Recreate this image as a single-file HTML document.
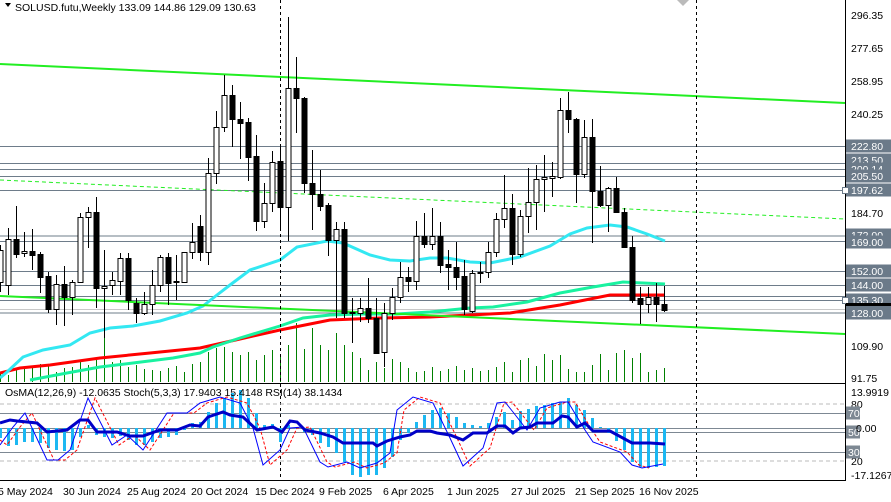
<!DOCTYPE html>
<html><head><meta charset="utf-8"><style>
html,body{margin:0;padding:0;background:#fff;width:891px;height:502px;overflow:hidden}
svg{display:block;font-family:"Liberation Sans",sans-serif}
.ax{font-size:10.5px;fill:#000}
.bx{font-size:10.5px;fill:#fff}
</style></head><body>
<svg id="s" width="891" height="502" viewBox="0 0 891 502" xmlns="http://www.w3.org/2000/svg">
<rect width="891" height="502" fill="#fff"/>
<g id="hl" stroke="#6e7c8a" stroke-width="1"></g>
<g id="vol" stroke="#008000" stroke-width="1"></g>
<polyline fill="none" stroke="#ff0000" stroke-width="3" points="0,373 20,368 50,365 100,358 150,353 200,348 240,339 280,330 330,320 380,318 430,317 470,315 510,313 560,305 610,295 665,295"/>
<polyline fill="none" stroke="#19f2a0" stroke-width="3" points="30,380 67,373 100,367 133,363 173,358 200,353 213,347 240,338 280,326 303,318 330,315 363,314 397,314 430,312 470,308 493,307 527,302 560,293 593,287 623,282 665,284"/>
<polyline fill="none" stroke="#33e8f2" stroke-width="3" points="0,378 7,372 23,357 43,350 70,345 90,333 110,328 133,326 160,321 187,313 203,306 217,295 230,285 250,270 280,260 297,247 327,241 343,243 370,255 390,260 410,261 430,258 447,258 470,262 490,263 520,257 550,246 560,240 570,234 587,228 610,225 627,227 647,234 665,241"/>
<line x1="0" y1="64" x2="845" y2="103" stroke="#22ee22" stroke-width="2"/>
<line x1="0" y1="296" x2="845" y2="334" stroke="#22ee22" stroke-width="2"/>
<line x1="0" y1="180" x2="845" y2="219" stroke="#22ee22" stroke-width="1" stroke-dasharray="4,3"/>
<g id="cd"></g>
<line x1="280.5" y1="0" x2="280.5" y2="480" stroke="#000" stroke-dasharray="3,3"/>
<line x1="696.5" y1="0" x2="696.5" y2="480" stroke="#000" stroke-dasharray="3,3"/>
<polygon points="677,0 689,0 683,6" fill="#bbb"/>
<polygon points="5,3 11,3 8,7" fill="#000"/>
<text x="15" y="11" class="ax">SOLUSD.futu,Weekly  133.09 144.86 129.09 130.63</text>
<line x1="0" y1="383.5" x2="845" y2="383.5" stroke="#000"/>
<line x1="0" y1="480.5" x2="845" y2="480.5" stroke="#000"/>
<line x1="0" y1="404" x2="845" y2="404" stroke="#bbb" stroke-dasharray="4,3"/>
<line x1="0" y1="461" x2="845" y2="461" stroke="#bbb" stroke-dasharray="4,3"/>
<line x1="0" y1="413.5" x2="845" y2="413.5" stroke="#7d8893"/>
<line x1="0" y1="428.5" x2="845" y2="428.5" stroke="#7d8893"/>
<line x1="0" y1="432.5" x2="845" y2="432.5" stroke="#7d8893"/>
<line x1="0" y1="452.5" x2="845" y2="452.5" stroke="#7d8893"/>
<g id="hist" fill="#1cb8f2"></g>
<polyline id="sig" fill="none" stroke="#ff0000" stroke-width="1" stroke-dasharray="3,2"/>
<polyline id="stm" fill="none" stroke="#0000ff" stroke-width="1" points="0,445 13,427 25,413 47,460 58,460 70,450 88,398 112,445 127,435 143,450 167,413 187,413 200,403 220,397 240,403 253,428 263,465 280,450 290,428 303,427 320,462 328,467 347,462 360,468 377,463 390,453 397,410 413,397 433,403 450,438 463,466 483,448 497,403 505,402 513,412 527,430 540,408 560,402 568,402 585,430 593,442 620,452 632,465 642,468 663,464"/>
<polyline fill="none" stroke="#0000c8" stroke-width="3" points="0,423 10,420 17,421 37,423 47,432 67,430 80,420 88,420 97,432 117,432 130,436 143,436 160,430 177,430 190,425 200,426 208,417 223,412 230,415 243,417 257,430 273,427 282,432 290,421 297,422 305,430 320,433 333,437 343,443 373,443 377,446 387,441 400,437 410,435 417,431 430,431 437,433 450,435 463,440 473,433 487,433 497,426 505,426 513,433 520,428 530,427 537,423 553,423 562,416 568,417 577,427 585,423 593,431 610,431 632,443 650,443 665,444"/>
<text x="5" y="396" class="ax">OsMA(12,26,9) -12.0635  Stoch(5,3,3) 17.9403 15.4148  RSI(14) 38.1434</text>
<line x1="845.5" y1="0" x2="845.5" y2="481" stroke="#000"/>
<g class="ax">
<text x="851" y="19">296.35</text>
<text x="851" y="52">277.65</text>
<text x="851" y="85">258.95</text>
<text x="851" y="118">240.25</text>
<text x="851" y="217">184.70</text>
<text x="851" y="350">109.90</text>
<text x="851" y="382">91.75</text>
<text x="851" y="396">13.9919</text>
<text x="851" y="408">80</text>
<text x="851" y="465">20</text>
<text x="851" y="479">-17.1267</text>
</g>
<g id="bxs"></g>
<rect x="846" y="303" width="45" height="3" fill="#000"/>
<g class="ax">
<text x="-2" y="495">5 May 2024</text>
<text x="63" y="495">30 Jun 2024</text>
<text x="127" y="495">25 Aug 2024</text>
<text x="191" y="495">20 Oct 2024</text>
<text x="255" y="495">15 Dec 2024</text>
<text x="319" y="495">9 Feb 2025</text>
<text x="383" y="495">6 Apr 2025</text>
<text x="447" y="495">1 Jun 2025</text>
<text x="511" y="495">27 Jul 2025</text>
<text x="575" y="495">21 Sep 2025</text>
<text x="639" y="495">16 Nov 2025</text>
</g>
</svg>
<script>
var NS="http://www.w3.org/2000/svg";
function el(p,t,a,txt){var e=document.createElementNS(NS,t);for(var k in a)e.setAttribute(k,a[k]);if(txt)e.textContent=txt;document.getElementById(p).appendChild(e);return e;}
[146,163,169,176,190,235.5,241,271,285,296,300,312.5].forEach(function(y){el("hl","line",{x1:0,y1:y+.5,x2:845,y2:y+.5});});
el("hl","line",{x1:0,y1:309.5,x2:845,y2:309.5,stroke:"#c8c8c8"});
[[222.80,146],[213.50,160],[209.14,169],[205.50,176],[197.62,190],[172.00,235],[169.00,242],[152.00,271],[144.00,285],[135.30,300],[128.00,313]].forEach(function(b){
 el("bxs","rect",{x:846,y:b[1]-6.5,width:45,height:13,fill:"#6b7a89"});
 el("bxs","text",{x:851,y:b[1]+4,"class":"bx"},b[0].toFixed(2));
});
el("bxs","rect",{x:842.5,y:187.5,width:6,height:6,fill:"#fff",stroke:"#6b7a89"});
el("bxs","rect",{x:842.5,y:297.5,width:6,height:6,fill:"#fff",stroke:"#6b7a89"});
[[70,413],[50,432],[30,452]].forEach(function(b){
 el("bxs","rect",{x:846,y:b[1]-6.5,width:14,height:13,fill:"#7d8893"});
 el("bxs","text",{x:848,y:b[1]+4,"class":"bx"},b[0]);
});
el("bxs","text",{x:856,y:432,"class":"ax"},"0.00");
var C=[[250,282,245,292,1],[239,285,228,295,1],[239,254,206,258,0],[251,253,232,257,1],[251,255,229,270,0],[254,277,252,293,0],[276,309,272,313,0],[284,309,275,325,1],[284,297,266,326,0],[282,297,280,315,1],
[217,282,213,283,1],[212,217,207,248,1],[212,288,197,308,0],[286,288,250,338,1],[280,285,272,295,1],[258,281,253,295,1],[258,300,253,310,0],[303,313,298,323,0],[304,313,292,315,1],[285,304,270,315,1],
[257,285,255,292,1],[257,283,253,305,0],[281,282,255,300,0],[252,282,252,283,1],[242,252,223,259,1],[226,252,215,261,0],[173,252,158,265,1],[127,173,111,184,1],[95,127,75,132,1],[95,119,85,147,0],
[119,123,102,159,0],[122,157,118,181,0],[156,221,135,231,0],[203,221,183,228,1],[162,203,151,212,1],[161,207,146,230,0],[88,207,17,241,1],[88,98,57,133,0],[98,183,97,193,0],[183,194,150,230,0],
[194,206,170,211,0],[205,240,203,256,0],[229,240,222,318,1],[229,313,222,318,0],[312,313,298,343,1],[308,313,298,322,1],[308,318,278,323,0],[318,353,298,353,0],[313,352,303,367,1],[297,313,288,320,1],
[277,297,262,303,1],[277,281,267,292,0],[236,281,221,290,1],[236,244,213,248,0],[236,244,208,250,1],[236,265,222,273,0],[264,267,250,290,0],[267,277,242,290,0],[276,309,260,315,0],[273,311,270,313,1],
[272,273,262,283,1],[252,272,242,278,1],[219,252,213,257,1],[208,219,175,228,1],[208,254,194,265,0],[216,254,210,257,1],[202,216,168,233,1],[179,202,165,230,1],[177,179,155,212,1],[176,178,162,197,1],
[110,177,98,179,1],[110,119,92,133,0],[119,174,118,203,0],[137,174,120,178,1],[137,191,119,243,0],[191,205,166,207,0],[188,205,187,232,1],[188,212,177,213,0],[212,247,208,248,0],[247,300,236,303,0],
[298,304,287,324,0],[297,304,287,313,1],[297,304,283,322,0],[304,310,286,312,0]];
var V=[372,375,370,368,366,364,365,372,368,367,362,365,360,338,362,360,367,365,369,370,371,368,366,372,364,362,352,348,347,352,355,352,360,355,350,354,345,323,349,328,345,350,333,345,352,358,370,362,368,359,362,368,372,371,367,371,369,366,370,368,371,370,367,362,372,360,358,366,354,360,355,369,372,372,365,354,370,353,350,358,353,372,370,368];
for(var k=0;k<C.length;k++){
 var x=8*k+0.5,c=C[k];
 el("vol","line",{x1:x,y1:V[k],x2:x,y2:382});
 el("cd","line",{x1:x,y1:c[2],x2:x,y2:c[3],stroke:"#000","stroke-width":1});
 var h=Math.max(1,c[1]-c[0]);
 el("cd","rect",{x:x-2.5,y:c[0]+.5,width:5,height:h,fill:c[4]?"#fff":"#000",stroke:"#000","stroke-width":1});
}
var H=[438,446,445,442,442,443,448,450,451,450,437,425,435,437,438,436,440,445,445,442,438,437,435,430,423,422,412,403,398,393,390,398,413,425,424,442,425,428,432,435,443,447,453,462,475,477,475,475,468,457,440,433,422,415,410,408,413,417,423,425,426,423,417,412,420,411,409,406,405,403,402,398,405,410,418,427,433,441,450,462,467,468,467,466];
for(var k=0;k<H.length;k++){var x=8*k+0.5,y=H[k];
 el("hist","rect",{x:x-1.5,y:Math.min(y,428),width:3,height:Math.max(1,Math.abs(y-428))});}
var pts=document.getElementById("stm").getAttribute("points").split(" ").map(function(p){var a=p.split(",");return (+a[0]+7)+","+a[1];});
var s=pts.slice(0,-1);s.unshift("0,440");
document.getElementById("sig").setAttribute("points",s.join(" "));
</script>
</body></html>
